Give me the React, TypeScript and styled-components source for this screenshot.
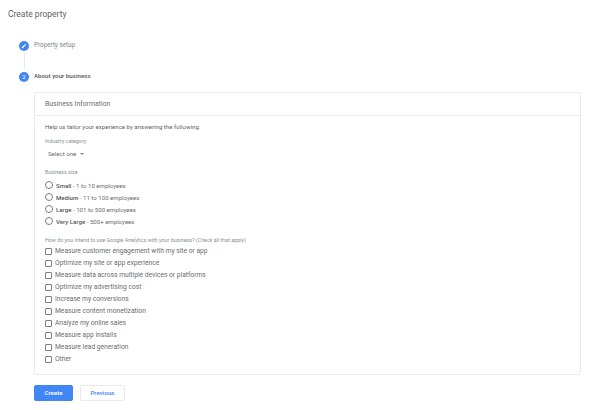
import React from 'react';
import styled, { createGlobalStyle } from 'styled-components';

const GlobalStyle = createGlobalStyle`
    html, body {
        margin: 0;
        padding: 0;
        background: #fff;
        font-family: Roboto, 'Liberation Sans', sans-serif;
        color: #5f6368;
    }
`;

const Page = styled.div`
    width: 600px;
    height: 410px;
    overflow: hidden;
    box-sizing: border-box;
    padding: 8px 19px 0 8px;
`;

const PageTitle = styled.h1`
    margin: 0;
    height: 12px;
    font-size: 8.5px;
    line-height: 12px;
    font-weight: 400;
    color: #5f6368;
`;

const Stepper = styled.div`
    margin-top: 20px;
    padding-left: 11px;
`;

const StepRow = styled.div`
    display: flex;
    align-items: center;
    gap: 5px;
    height: 11px;
`;

const StepBadge = styled.div`
    width: 10px;
    height: 10px;
    border-radius: 50%;
    background: #4285f4;
    color: #fff;
    font-size: 6px;
    display: flex;
    align-items: center;
    justify-content: center;
`;

const StepLabel = styled.div<{ $active?: boolean }>`
    font-size: ${props => (props.$active ? '6.2px' : '6.3px')};
    line-height: 11px;
    font-weight: ${props => (props.$active ? 500 : 400)};
    color: ${props => (props.$active ? '#55595c' : '#80868b')};
`;

const Connector = styled.div`
    width: 1px;
    height: 16px;
    margin: 2px 0 2px 5px;
    background: #e8eaed;
`;

const Card = styled.section`
    margin: 10px 0 0 26px;
    box-sizing: border-box;
    height: 283px;
    border: 1px solid #e8eaed;
    border-radius: 3px;
`;

const CardHeader = styled.div`
    height: 23px;
    box-sizing: border-box;
    padding-left: 10px;
    display: flex;
    align-items: center;
    border-bottom: 1px solid #e8eaed;
    font-size: 6.9px;
    color: #6a6e72;
`;

const CardBody = styled.div`
    padding: 7px 10px 0;
`;

const Intro = styled.div`
    font-size: 6.1px;
    line-height: 8px;
    color: #5f6368;
`;

const FieldLabel = styled.div`
    font-size: 5.35px;
    line-height: 7px;
    color: #8a8f94;
`;

const IndustrySection = styled.div`
    margin-top: 7px;
`;

const SelectBox = styled.div`
    display: flex;
    align-items: center;
    gap: 4px;
    height: 14px;
    padding-left: 3px;
    margin-top: 1px;
    font-size: 6.1px;
    color: #6a6e72;
`;

const Caret = styled.span`
    width: 0;
    height: 0;
    margin-top: 1px;
    border-left: 2px solid transparent;
    border-right: 2px solid transparent;
    border-top: 2px solid #80868b;
`;

const SizeSection = styled.div`
    margin-top: 9px;
`;

const RadioList = styled.div`
    margin-top: 3px;
`;

const RadioRow = styled.div`
    display: flex;
    align-items: center;
    gap: 3px;
    height: 12px;
    font-size: 6.1px;
    color: #6a6e72;

    b {
        font-weight: 500;
        color: #55595c;
    }
`;

const RadioCircle = styled.span`
    width: 6px;
    height: 6px;
    border: 1px solid #7a7e82;
    border-radius: 50%;
`;

const UsageSection = styled.div`
    margin-top: 10px;
`;

const CheckList = styled.div`
    margin-top: 1px;
`;

const CheckRow = styled.div`
    display: flex;
    align-items: center;
    gap: 3px;
    height: 12px;
    font-size: 6.7px;
    color: #6a6e72;
`;

const CheckBox = styled.span`
    width: 5px;
    height: 5px;
    border: 1px solid #7a7e82;
    border-radius: 1px;
`;

const Actions = styled.div`
    display: flex;
    gap: 7px;
    margin: 10px 0 0 26px;
`;

const Button = styled.button<{ $primary?: boolean }>`
    width: ${props => (props.$primary ? '39px' : '45px')};
    height: 16px;
    padding: 0;
    border-radius: 2px;
    font-family: inherit;
    font-size: 6.2px;
    font-weight: 500;
    border: 1px solid ${props => (props.$primary ? '#4285f4' : '#e8eaed')};
    background: ${props => (props.$primary ? '#4285f4' : '#fff')};
    color: ${props => (props.$primary ? '#fff' : '#4285f4')};
`;

const sizes = [
    ['Small', '1 to 10 employees'],
    ['Medium', '11 to 100 employees'],
    ['Large', '101 to 500 employees'],
    ['Very Large', '500+ employees'],
];

const uses = [
    'Measure customer engagement with my site or app',
    'Optimize my site or app experience',
    'Measure data across multiple devices or platforms',
    'Optimize my advertising cost',
    'Increase my conversions',
    'Measure content monetization',
    'Analyze my online sales',
    'Measure app installs',
    'Measure lead generation',
    'Other',
];

const App: React.FC = () => {
    return (
        <Page>
            <GlobalStyle />
            <PageTitle>Create property</PageTitle>
            <Stepper>
                <StepRow>
                    <StepBadge>
                        <svg width="6" height="6" viewBox="0 0 24 24" fill="#fff">
                            <path d="M3 17.25V21h3.75L17.81 9.94l-3.75-3.75L3 17.25zM20.71 7.04a1 1 0 0 0 0-1.41l-2.34-2.34a1 1 0 0 0-1.41 0l-1.83 1.83 3.75 3.75 1.83-1.83z" />
                        </svg>
                    </StepBadge>
                    <StepLabel>Property setup</StepLabel>
                </StepRow>
                <Connector />
                <StepRow>
                    <StepBadge>2</StepBadge>
                    <StepLabel $active>About your business</StepLabel>
                </StepRow>
            </Stepper>
            <Card>
                <CardHeader>Business Information</CardHeader>
                <CardBody>
                    <Intro>Help us tailor your experience by answering the following.</Intro>
                    <IndustrySection>
                        <FieldLabel>Industry category</FieldLabel>
                        <SelectBox>
                            Select one <Caret />
                        </SelectBox>
                    </IndustrySection>
                    <SizeSection>
                        <FieldLabel>Business size</FieldLabel>
                        <RadioList>
                            {sizes.map(([name, range]) => (
                                <RadioRow key={name}>
                                    <RadioCircle />
                                    <span>
                                        <b>{name}</b> - {range}
                                    </span>
                                </RadioRow>
                            ))}
                        </RadioList>
                    </SizeSection>
                    <UsageSection>
                        <FieldLabel>How do you intend to use Google Analytics with your business? (Check all that apply)</FieldLabel>
                        <CheckList>
                            {uses.map(use => (
                                <CheckRow key={use}>
                                    <CheckBox />
                                    {use}
                                </CheckRow>
                            ))}
                        </CheckList>
                    </UsageSection>
                </CardBody>
            </Card>
            <Actions>
                <Button $primary>Create</Button>
                <Button>Previous</Button>
            </Actions>
        </Page>
    );
};

export default App;
